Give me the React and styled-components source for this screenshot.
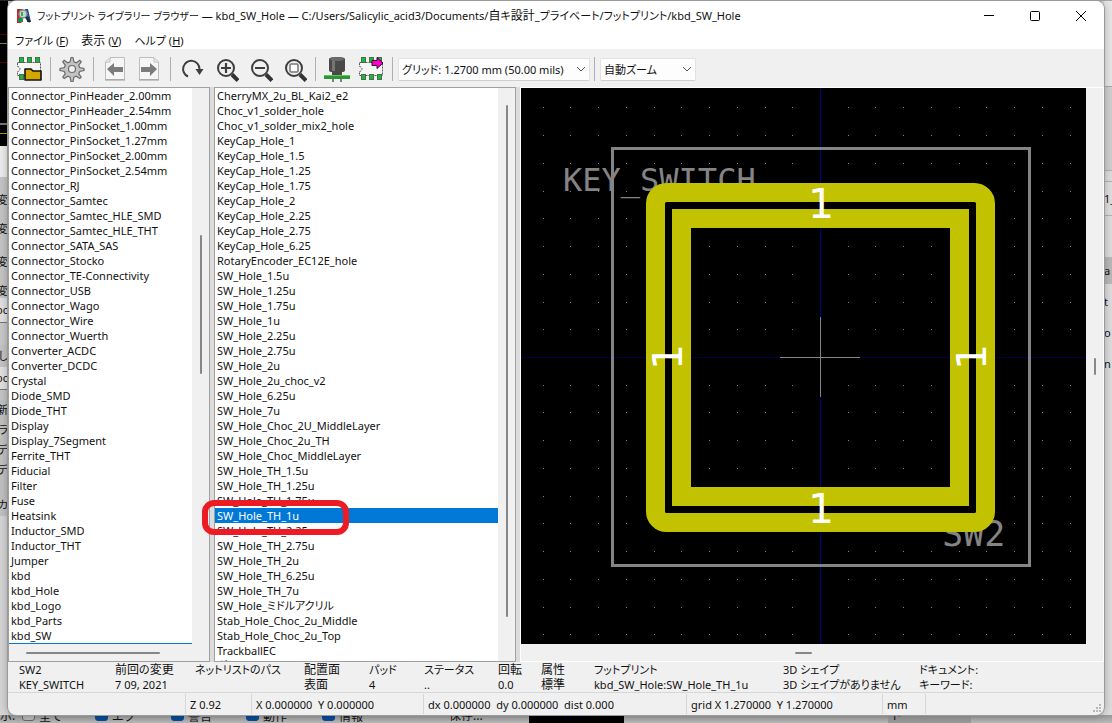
import React from "react";
import styled, { createGlobalStyle } from "styled-components";

const Global = createGlobalStyle`
  * { box-sizing: border-box; }
  body {
    margin: 0;
    background: #c4c4c4;
    color: #111;
    font: 11px/15px "Noto Sans", "Noto Sans CJK JP", sans-serif;
    font-feature-settings: "palt";
  }
  button, select { font: inherit; color: inherit; font-feature-settings: inherit; }
`;

const Desktop = styled.div`
  display: grid;
  grid-template: 1px minmax(0, 1fr) 8px / 8px minmax(0, 1fr) 8px;
  height: 100vh;
  overflow: hidden;
  background: linear-gradient(90deg, #c8c8c8, #b4b4b4 30%, #b4b4b4 80%, #d6d6d6);
`;

const TopEdge = styled.div`
  grid-column: 1 / -1;
  background: linear-gradient(90deg, #262626 56%, #a8a8a8 56%);
`;

const SideStrip = styled.div`
  display: flex;
  flex-direction: column;
  overflow: hidden;
  white-space: nowrap;
`;

const Band = styled.div`
  flex: ${(p) => (p.$h ? `0 0 ${p.$h}px` : "1 1 0")};
  line-height: ${(p) => p.$h || 15}px;
  background: ${(p) => p.$bg};
  direction: ${(p) => (p.$end ? "rtl" : "ltr")};
  overflow: hidden;
`;

const BottomStrip = styled.div`
  grid-column: 1 / -1;
  display: flex;
  align-items: flex-end;
  overflow: hidden;
  font-size: 12px;
  line-height: 15px;
  background: linear-gradient(#989898, #b8b8b8);
`;

const Under = styled.span`
  flex: 0 0 ${(p) => p.$w}px;
  height: 15px;
  padding-left: ${(p) => p.$pad || 0}px;
  background: ${(p) => p.$bg || "transparent"};
  white-space: nowrap;
`;

const UnderBox = styled.span`
  display: inline-block;
  width: 13px;
  height: 13px;
  margin-right: 4px;
  border: 1px solid ${(p) => (p.$on ? "#0a4a94" : "#666")};
  border-radius: 3px;
  background: ${(p) => (p.$on ? "#0a4a94" : "#b8b8b8")};
`;

const Window = styled.main`
  display: flex;
  flex-direction: column;
  overflow: hidden;
  border-radius: 8px;
  background: #f0f0f0;
  box-shadow: 0 0 0 1px #9a9a9a, 0 0 8px rgba(0, 0, 0, 0.3);
  z-index: 1;
`;

const TitleBar = styled.header`
  display: flex;
  align-items: center;
  flex: 0 0 30px;
  padding-left: 8px;
  background: #fff;
`;

const Title = styled.h1`
  flex: 1;
  margin: 0 0 0 5px;
  font-size: 11px;
  font-weight: 400;
  white-space: nowrap;
`;

const AppName = styled.span`
  font-size: 10px;
`;

const Kanji = styled.span`
  font-size: 12px;
`;

const CaptionButton = styled.button`
  display: grid;
  place-items: center;
  width: 46px;
  height: 30px;
  padding: 0;
  border: 0;
  background: none;
`;

const MenuBar = styled.nav`
  display: flex;
  align-items: center;
  gap: 13px;
  flex: 0 0 18px;
  padding-left: 7px;
  background: #fff;
`;

const MenuButton = styled.button`
  padding: 0;
  border: 0;
  background: none;
  white-space: nowrap;
`;

const Toolbar = styled.div`
  display: flex;
  align-items: center;
  flex: 0 0 38px;
  padding: 2px 0 0 4px;
`;

const ToolButton = styled.button`
  display: grid;
  place-items: center;
  flex: 0 0 34px;
  height: 34px;
  padding: 0;
  border: 0;
  background: none;
`;

const Divider = styled.span`
  width: 1px;
  height: 24px;
  margin: 0 4px;
  background: #b0b0b0;
`;

const SelectBox = styled.label`
  display: grid;
  align-items: center;
  width: ${(p) => p.$w}px;
  margin-left: 1px;
  > * { grid-area: 1 / 1; }
  > svg { justify-self: end; margin-right: 4px; pointer-events: none; }
`;

const Select = styled.select`
  appearance: none;
  width: 100%;
  height: 23px;
  padding: 0 18px 0 3px;
  border: 1px solid #e2e2e2;
  border-bottom-color: #cfcfcf;
  border-radius: 2px;
  background: #fdfdfd;
`;

const Workspace = styled.section`
  position: relative;
  display: grid;
  grid-template-columns: 202px 302px minmax(0, 1fr);
  gap: 4px;
  flex: 1 1 0;
  min-height: 0;
  background: #dcdcdc;
`;

const Pane = styled.div`
  display: grid;
  grid-template: minmax(0, 1fr) auto / minmax(0, 1fr) 17px;
  min-height: 0;
  border: 1px solid #a0a0a0;
  background: #f0f0f0;
`;

const List = styled.ul`
  margin: 0;
  padding: 0;
  list-style: none;
  overflow: hidden;
  background: #fff;
  border-bottom: ${(p) => (p.$focus ? "1px solid #0078d7" : "0")};
`;

const Item = styled.li`
  height: 15px;
  padding-left: 2px;
  white-space: nowrap;
  color: ${(p) => (p.$selected ? "#fff" : "inherit")};
  background: ${(p) => (p.$selected ? "#0078d7" : "transparent")};
`;

const VTrack = styled.div`
  display: flex;
  justify-content: center;
  padding-top: ${(p) => p.$before}px;
`;

const HTrack = styled.div`
  grid-column: 1 / -1;
  display: flex;
  align-items: center;
  height: 17px;
  padding-left: ${(p) => p.$before}px;
`;

const Thumb = styled.span`
  width: ${(p) => p.$w || 2}px;
  height: ${(p) => p.$h || 2}px;
  border-radius: 1px;
  background: #868686;
`;

const CanvasPane = styled.div`
  display: grid;
  grid-template: minmax(0, 1fr) 17px / minmax(0, 1fr) 17px;
  min-width: 0;
  border: 1px solid #fff;
  background: #f0f0f0;
`;

const Board = styled.svg`
  display: block;
  width: 100%;
  height: 100%;
  min-height: 0;
  background: #000;
`;

const Marker = styled.div`
  position: absolute;
  left: 194px;
  top: 413px;
  width: 147px;
  height: 35px;
  border: 6px solid #ed1c24;
  border-radius: 12px;
  pointer-events: none;
`;

const Info = styled.dl`
  display: grid;
  grid-template-columns: 96px 80px 109px 65px 55px 74px 43px 53px 189px 136px minmax(0, 1fr);
  flex: 0 0 31px;
  margin: 0;
  padding-left: 11px;
  border-bottom: 1px solid #d7d7d7;
  white-space: nowrap;
  dt { height: 15px; }
  dd { height: 15px; margin: 0; }
`;

const StatusBar = styled.footer`
  display: flex;
  align-items: center;
  flex: 0 0 22px;
`;

const Status = styled.span`
  flex: 0 0 ${(p) => p.$w}px;
  height: 20px;
  padding-left: 4px;
  border-left: 1px solid ${(p) => (p.$plain ? "transparent" : "#d7d7d7")};
  line-height: 22px;
  white-space: pre;
`;

const Grip = styled.svg`
  margin: auto 2px 2px auto;
`;

const libraries = [
  "Connector_PinHeader_2.00mm", "Connector_PinHeader_2.54mm", "Connector_PinSocket_1.00mm",
  "Connector_PinSocket_1.27mm", "Connector_PinSocket_2.00mm", "Connector_PinSocket_2.54mm",
  "Connector_RJ", "Connector_Samtec", "Connector_Samtec_HLE_SMD", "Connector_Samtec_HLE_THT",
  "Connector_SATA_SAS", "Connector_Stocko", "Connector_TE-Connectivity", "Connector_USB",
  "Connector_Wago", "Connector_Wire", "Connector_Wuerth", "Converter_ACDC", "Converter_DCDC",
  "Crystal", "Diode_SMD", "Diode_THT", "Display", "Display_7Segment", "Ferrite_THT", "Fiducial",
  "Filter", "Fuse", "Heatsink", "Inductor_SMD", "Inductor_THT", "Jumper", "kbd", "kbd_Hole",
  "kbd_Logo", "kbd_Parts", "kbd_SW",
];

const footprints = [
  "CherryMX_2u_BL_Kai2_e2", "Choc_v1_solder_hole", "Choc_v1_solder_mix2_hole", "KeyCap_Hole_1",
  "KeyCap_Hole_1.5", "KeyCap_Hole_1.25", "KeyCap_Hole_1.75", "KeyCap_Hole_2", "KeyCap_Hole_2.25",
  "KeyCap_Hole_2.75", "KeyCap_Hole_6.25", "RotaryEncoder_EC12E_hole", "SW_Hole_1.5u",
  "SW_Hole_1.25u", "SW_Hole_1.75u", "SW_Hole_1u", "SW_Hole_2.25u", "SW_Hole_2.75u", "SW_Hole_2u",
  "SW_Hole_2u_choc_v2", "SW_Hole_6.25u", "SW_Hole_7u", "SW_Hole_Choc_2U_MiddleLayer",
  "SW_Hole_Choc_2u_TH", "SW_Hole_Choc_MiddleLayer", "SW_Hole_TH_1.5u", "SW_Hole_TH_1.25u",
  "SW_Hole_TH_1.75u", "SW_Hole_TH_1u", "SW_Hole_TH_2.25u", "SW_Hole_TH_2.75u", "SW_Hole_TH_2u",
  "SW_Hole_TH_6.25u", "SW_Hole_TH_7u", "SW_Hole_ミドルアクリル", "Stab_Hole_Choc_2u_Middle",
  "Stab_Hole_Choc_2u_Top", "TrackballEC", "ダミー",
];

const info = [
  ["SW2", "KEY_SWITCH"], ["前回の変更", "7 09, 2021"], ["ネットリストのパス", ""],
  ["配置面", "表面"], ["パッド", "4"], ["ステータス", ".."], ["回転", "0.0"], ["属性", "標準"],
  ["フットプリント", "kbd_SW_Hole:SW_Hole_TH_1u"], ["3D シェイプ", "3D シェイプがありません"],
  ["ドキュメント:", "キーワード:"],
];

// Sets runs of kanji one size above the Latin and kana text around them.
function Mixed({ children }) {
  return children
    .split(/([\u4e00-\u9fff]+)/)
    .map((part, i) => (i % 2 ? <Kanji key={i}>{part}</Kanji> : part));
}

function AppIcon() {
  return (
    <svg width="16" height="16" viewBox="0 0 16 16">
      <path d="M1 1h6v12l-2 2H1z" fill="#c8242c" />
      <path d="M9 1h3l3 13h-4z" fill="#234c9c" />
      <path d="M2 10h5v4H2z" fill="#1d8e48" />
      <circle cx="7" cy="6" r="4" fill="#b9dcc0" stroke="#7e8f91" strokeWidth="1.4" />
      <path d="M5 4h2v4H5z" fill="#4f9f6e" />
      <path d="M10 9l4 5" stroke="#23262b" strokeWidth="2.4" />
    </svg>
  );
}

function Chip({ children }) {
  return (
    <>
      <path d="M1.500 6.500h23v13h-23v-4a2.500 2.500 0 0 0 0-5z" fill="#f6f6f6" stroke="#555" strokeDasharray="2 1" />
      <g fill="#14bd38" stroke="#4d6b53">
        {[3, 11, 19].map((x) => (
          <g key={x}>
            <rect x={x + 0.5} y="1.500" width="4" height="5" />
            <rect x={x + 0.5} y="18.500" width="4" height="5" />
          </g>
        ))}
      </g>
      {children}
    </>
  );
}

const Svg = ({ children }) => (
  <svg width="26" height="26" viewBox="0 0 26 26" fill="none">{children}</svg>
);

function LibraryIcon() {
  return (
    <Svg>
      <Chip>
        <path d="M9 13h6l2 2h8v9H9z" fill="#d3a500" stroke="#111" strokeWidth="1.600" strokeLinejoin="round" />
      </Chip>
    </Svg>
  );
}

function GearIcon() {
  return (
    <Svg>
      <g fill="#c2c2c2" stroke="#6c6c6c" strokeWidth="1.200">
        <path d="M12 1.500h2l.9 4.300 2.300 1 3.600-2.500 1.400 1.400-2.500 3.600 1 2.300 4.300.9v2l-4.300.9-1 2.300 2.500 3.500-1.400 1.400-3.600-2.400-2.300 1-.9 4.300h-2l-.9-4.300-2.300-1-3.600 2.400-1.400-1.400 2.500-3.500-1-2.300-4.300-.9v-2l4.300-.9 1-2.300-2.500-3.600 1.400-1.400 3.600 2.500 2.300-1z" />
        <circle cx="13" cy="13" r="3.500" fill="#f0f0f0" />
      </g>
    </Svg>
  );
}

function PageArrowIcon({ back }) {
  return (
    <Svg>
      <path d={back ? "M8 1.500h14.500v22h-19V6z" : "M3.500 1.500H18L22.500 6v17.500h-19z"} fill="#f6f6f6" stroke="#bcbcbc" />
      <path d={back ? "M8 2v4H4" : "M18 2v4h4"} stroke="#bcbcbc" />
      <path d={back ? "M5 13l7-6v4h9v5h-9v4z" : "M21 13l-7-6v4H5v5h9v4z"} fill="#7c7c7c" />
      <path d="M3 24h20" stroke="#999" />
    </Svg>
  );
}

function RotateIcon() {
  return (
    <Svg>
      <path d="M9 20.500A8.200 8.200 0 1 1 20.500 13" stroke="#3e3e3e" strokeWidth="2" />
      <path d="M16.500 13h8L20.500 19z" fill="#3e3e3e" />
    </Svg>
  );
}

function ZoomIcon({ kind }) {
  return (
    <Svg>
      <circle cx="13" cy="12" r="8" stroke="#3e3e3e" strokeWidth="2" />
      <path d="M19 18.500l6 6" stroke="#333" strokeWidth="4" />
      {kind === "fit" ? (
        <rect x="9" y="8" width="8" height="8" rx="1" fill="#fafafa" stroke="#777" strokeWidth="1.500" />
      ) : (
        <path d={kind === "in" ? "M8 12h10M13 7v10" : "M8 12h10"} stroke="#3e3e3e" strokeWidth="2.200" />
      )}
    </Svg>
  );
}

function Viewer3DIcon() {
  return (
    <Svg>
      <path d="M9 22v4M17 22v4" stroke="#111" />
      <path d="M5 3q0-2 8-2t8 2v11q0 2-3 2v4H8v-4q-3 0-3-2z" fill="#4a4a4a" />
      <path d="M8 4h3v11H8z" fill="#757575" />
      <ellipse cx="13" cy="3" rx="7" ry="2" fill="#6a6a6a" />
      <path d="M0 19h26v4H0z" fill="#2c9536" />
      <path d="M0 19h26v1H0z" fill="#5fc461" />
    </Svg>
  );
}

function InsertIcon() {
  return (
    <Svg>
      <Chip>
        <path d="M14 4.500h5V1.500l6 5.500-6 5.500v-3h-5z" fill="#f0c" stroke="#300028" />
      </Chip>
    </Svg>
  );
}

const Chevron = () => (
  <svg width="10" height="6" viewBox="0 0 10 6" fill="none" stroke="#555">
    <path d="M1 1l4 4 4-4" />
  </svg>
);

const ORIGIN = { x: 299, y: 269 };
const PITCH = 27.74;

function gridDots() {
  const dots = [];
  for (let i = -18; i <= 18; i += 1) {
    for (let j = -18; j <= 18; j += 1) {
      if (i && j) {
        dots.push(
          <rect
            key={`${i},${j}`}
            x={Math.round(ORIGIN.x + i * PITCH)}
            y={Math.round(ORIGIN.y + j * PITCH)}
            width="1"
            height="1"
          />
        );
      }
    }
  }
  return dots;
}

function BoardView() {
  return (
    <Board viewBox="0 0 565 556" preserveAspectRatio="xMidYMid slice" role="img" aria-label="SW_Hole_TH_1u">
      <g fill="#848484">{gridDots()}</g>
      <g shapeRendering="crispEdges">
        <path d="M299 -300h1v1200h-1z" fill="#000084" />
        <path d="M-500 269h1600v1h-1600z" fill="#000048" />
      </g>
      <g fill="#848484" fontFamily="DejaVu Sans Mono, monospace" fontSize="32">
        <text x="42" y="103">KEY_SWITCH</text>
        <text x="421" y="458" fontSize="35">SW2</text>
      </g>
      <g fill="none">
        <rect x="91.500" y="60.500" width="417" height="417" stroke="#848484" strokeWidth="3" />
        <rect x="134.500" y="104.500" width="330" height="330" rx="11" stroke="#c2c200" strokeWidth="19" />
        <rect x="160.500" y="130.500" width="278" height="278" stroke="#c2c200" strokeWidth="19" />
      </g>
      <path d="M259 269h80v1h-80zM299 229h1v80h-1z" fill="#848484" />
      <g fill="#fff" fontFamily="DejaVu Sans, sans-serif" fontSize="41" textAnchor="middle">
        <text x="300" y="130">1</text>
        <text x="300" y="435">1</text>
        <text transform="translate(161 269) rotate(-90)">1</text>
        <text transform="translate(465 269) rotate(-90)">1</text>
      </g>
    </Board>
  );
}

function LeftBackdrop() {
  return (
    <SideStrip aria-hidden="true">
      <Band $h={33} $bg="#000" />
      <Band $h={1} $bg="#5a0000" />
      <Band $h={8} $bg="#000" />
      <Band $h={1} $bg="#777" />
      <Band $h={18} $bg="#000" />
      <Band $h={1} $bg="#5a0000" />
      <Band $h={60} $bg="#000" />
      <Band $h={2} $bg="#777" />
      <Band $h={8} $bg="#000" />
      <Band $h={1} $bg="#a8a000" />
      <Band $h={12} $bg="#000" />
      <Band $h={31} $bg="#ebebeb" />
      <Band $h={15} $bg="#c4c4c4" />
      <Band $h={15} $bg="#c4c4c4" $end>変</Band>
      <Band $h={14} $bg="#c4c4c4" />
      <Band $h={15} $bg="#c4c4c4" $end>変</Band>
      <Band $h={18} $bg="#c4c4c4" />
      <Band $h={15} $bg="#c4c4c4" $end>変</Band>
      <Band $h={14} $bg="#c4c4c4" />
      <Band $h={15} $bg="#c4c4c4" $end>変</Band>
      <Band $h={24} $bg="#e0e0e0" $end>oc</Band>
      <Band $h={1} $bg="#777" />
      <Band $h={22} $bg="#c8c8c8" />
      <Band $h={22} $bg="#c4c4c4" $end>し</Band>
      <Band $h={22} $bg="#e0e0e0" $end>oc</Band>
      <Band $h={1} $bg="#777" />
      <Band $h={10} $bg="#c4c4c4" />
      <Band $h={20} $bg="#c0c0c0" $end>新</Band>
      <Band $h={20} $bg="#c0c0c0" $end>ラ</Band>
      <Band $h={20} $bg="#c0c0c0" $end>デ</Band>
      <Band $h={20} $bg="#c0c0c0" $end>デ</Band>
      <Band $h={14} $bg="#c0c0c0" />
      <Band $h={22} $bg="#c0c0c0" $end>カ</Band>
      <Band $bg="#d4d4d4" />
    </SideStrip>
  );
}

function RightBackdrop() {
  return (
    <SideStrip aria-hidden="true">
      <Band $h={85} $bg="#e6e6e6" />
      <Band $h={1} $bg="#a8a8a8" />
      <Band $h={83} $bg="#cfcfcf" />
      <Band $h={1} $bg="#b0b0b0" />
      <Band $h={10} $bg="#dcdcdc" />
      <Band $h={1} $bg="#b0b0b0" />
      <Band $h={33} $bg="#dedede">1_</Band>
      <Band $h={1} $bg="#b0b0b0" />
      <Band $h={41} $bg="#dcdcdc" />
      <Band $h={27} $bg="#b8b8b8">a</Band>
      <Band $h={10} $bg="#dcdcdc" />
      <Band $h={15} $bg="#dcdcdc">t</Band>
      <Band $h={16} $bg="#dcdcdc" />
      <Band $h={15} $bg="#dcdcdc">o</Band>
      <Band $h={16} $bg="#dcdcdc" />
      <Band $h={15} $bg="#dcdcdc">n</Band>
      <Band $bg="#dcdcdc" />
    </SideStrip>
  );
}

export default function App() {
  return (
    <>
      <Global />
      <Desktop>
        <TopEdge />
        <LeftBackdrop />
        <Window>
          <TitleBar>
            <AppIcon />
            <Title>
              <AppName>フットプリント ライブラリー ブラウザー</AppName>
              <Mixed> — kbd_SW_Hole — C:/Users/Salicylic_acid3/Documents/自キ設計_プライベート/フットプリント/kbd_SW_Hole</Mixed>
            </Title>
            <CaptionButton aria-label="最小化">
              <svg width="10" height="10"><path d="M0 4.500h10" stroke="#000" /></svg>
            </CaptionButton>
            <CaptionButton aria-label="最大化">
              <svg width="10" height="10"><rect x="0.500" y="0.500" width="9" height="9" rx="1" fill="none" stroke="#000" /></svg>
            </CaptionButton>
            <CaptionButton aria-label="閉じる">
              <svg width="10" height="10"><path d="M0 0l10 10M10 0L0 10" stroke="#000" /></svg>
            </CaptionButton>
          </TitleBar>
          <MenuBar>
            <MenuButton>ファイル (<u>F</u>)</MenuButton>
            <MenuButton><Mixed>表示</Mixed> (<u>V</u>)</MenuButton>
            <MenuButton>ヘルプ (<u>H</u>)</MenuButton>
          </MenuBar>
          <Toolbar role="toolbar">
            <ToolButton aria-label="ライブラリー"><LibraryIcon /></ToolButton>
            <Divider />
            <ToolButton aria-label="設定"><GearIcon /></ToolButton>
            <Divider />
            <ToolButton aria-label="前へ"><PageArrowIcon back /></ToolButton>
            <ToolButton aria-label="次へ"><PageArrowIcon /></ToolButton>
            <Divider />
            <ToolButton aria-label="再描画"><RotateIcon /></ToolButton>
            <ToolButton aria-label="ズームイン"><ZoomIcon kind="in" /></ToolButton>
            <ToolButton aria-label="ズームアウト"><ZoomIcon kind="out" /></ToolButton>
            <ToolButton aria-label="ズームフィット"><ZoomIcon kind="fit" /></ToolButton>
            <Divider />
            <ToolButton aria-label="3D ビューアー"><Viewer3DIcon /></ToolButton>
            <ToolButton aria-label="フットプリントを挿入"><InsertIcon /></ToolButton>
            <Divider />
            <SelectBox $w={192}>
              <Select aria-label="グリッド">
                <option>グリッド: 1.2700 mm (50.00 mils)</option>
              </Select>
              <Chevron />
            </SelectBox>
            <Divider />
            <SelectBox $w={96}>
              <Select aria-label="ズーム">
                <option>自動ズーム</option>
              </Select>
              <Chevron />
            </SelectBox>
          </Toolbar>
          <Workspace>
            <Pane>
              <List $focus>
                {libraries.map((name) => <Item key={name}>{name}</Item>)}
              </List>
              <VTrack $before={147}><Thumb $h={139} /></VTrack>
              <HTrack $before={17}><Thumb $w={134} /></HTrack>
            </Pane>
            <Pane>
              <List>
                {footprints.map((name) => (
                  <Item key={name} $selected={name === "SW_Hole_TH_1u"}>{name}</Item>
                ))}
              </List>
              <VTrack $before={17}><Thumb $h={512} /></VTrack>
            </Pane>
            <CanvasPane>
              <BoardView />
              <VTrack $before={270}><Thumb $h={17} /></VTrack>
              <HTrack $before={274}><Thumb $w={17} /></HTrack>
            </CanvasPane>
            <Marker />
          </Workspace>
          <Info>
            {info.map(([label, value]) => (
              <div key={label}>
                <dt><Mixed>{label}</Mixed></dt>
                <dd><Mixed>{value}</Mixed></dd>
              </div>
            ))}
          </Info>
          <StatusBar>
            <Status $w={177} $plain />
            <Status $w={66}>Z 0.92</Status>
            <Status $w={172}>X 0.000000  Y 0.000000</Status>
            <Status $w={263}>dx 0.000000  dy 0.000000  dist 0.000</Status>
            <Status $w={196}>grid X 1.270000  Y 1.270000</Status>
            <Status $w={43}>mm</Status>
            <Status $w={6} />
            <Grip width="9" height="9" viewBox="0 0 9 9" fill="#b8b8b8">
              <path d="M6 0h2v2H6zM3 3h2v2H3zM6 3h2v2H6zM0 6h2v2H0zM3 6h2v2H3zM6 6h2v2H6z" />
            </Grip>
          </StatusBar>
        </Window>
        <RightBackdrop />
        <BottomStrip aria-hidden="true">
          <Under $w={22}>示:</Under>
          <Under $w={73}><UnderBox />全て</Under>
          <Under $w={76}><UnderBox $on />エラー</Under>
          <Under $w={75}><UnderBox $on />警告</Under>
          <Under $w={76}><UnderBox $on />動作</Under>
          <Under $w={100}><UnderBox $on />情報</Under>
          <Under $w={107} $pad={27}>保存...</Under>
          <Under $w={95} $bg="#000" />
          <Under $w={264} />
          <Under $w={83} $pad={4} $bg="#989898">ド</Under>
        </BottomStrip>
      </Desktop>
    </>
  );
}
